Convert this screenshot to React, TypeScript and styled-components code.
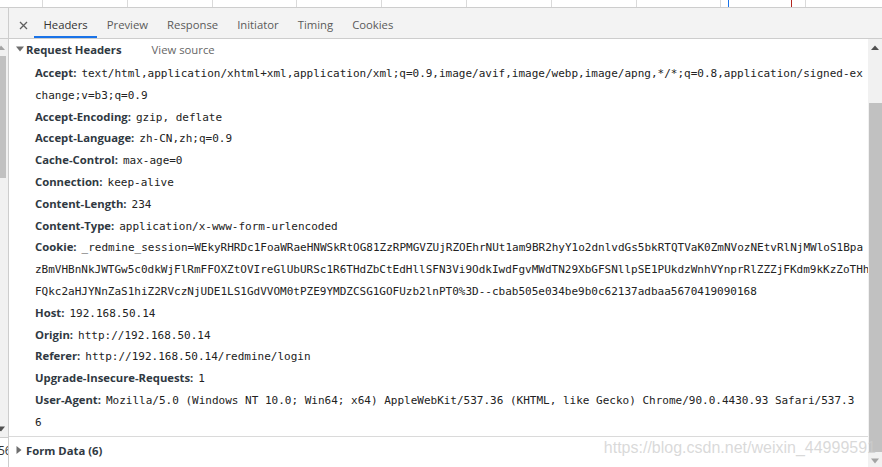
import React from "react";
import styled, { createGlobalStyle } from "styled-components";

const Global = createGlobalStyle`
  html, body { margin: 0; padding: 0; background: #fff; overflow: hidden; }
  * { box-sizing: border-box; }
`;

const UI = `"Open Sans", "Noto Sans", "Liberation Sans", sans-serif`;
const MONO = `"DejaVu Sans Mono", "Liberation Mono", monospace`;
const UI_SIZE = "11.3px";

const Root = styled.div`
  width: 882px;
  height: 467px;
  display: flex;
  flex-direction: column;
  position: relative;
  overflow: hidden;
  font-family: ${UI};
`;

const Timeline = styled.div`
  height: 8px;
  flex: none;
  border-bottom: 1px solid #cdcdcd;
  display: grid;
  grid-template-columns: 42px repeat(10, 84.8px) 1fr;
  position: relative;
`;

const TimeCell = styled.div<{ $first?: boolean }>`
  border-left: ${(p) => (p.$first ? "none" : "1px solid #dadada")};
`;

const Marker = styled.div<{ $x: number; $color: string }>`
  position: absolute;
  top: 0;
  bottom: 0;
  left: ${(p) => p.$x}px;
  width: 1px;
  background: ${(p) => p.$color};
`;

const Main = styled.div`
  flex: 1;
  display: flex;
  min-height: 0;
`;

const LeftPanel = styled.div`
  width: 9px;
  flex: none;
  border-right: 1px solid #cdcdcd;
  display: flex;
  flex-direction: column;
  overflow: hidden;
`;

const LeftTabArea = styled.div`
  height: 31px;
  flex: none;
  background: #f3f3f3;
  border-bottom: 1px solid #cdcdcd;
`;

const LeftScroll = styled.div`
  flex: 1;
  background: #f1f1f1;
  display: flex;
  flex-direction: column;
`;

const LeftArrow = styled.div`
  height: 17px;
  flex: none;
  display: flex;
  align-items: center;
  svg { margin-left: -3px; }
`;

const LeftThumb = styled.div`
  width: 6px;
  height: 122px;
  background: #c1c1c1;
  flex: none;
`;

const Spacer = styled.div`
  flex: 1;
`;

const LeftStatus = styled.div`
  height: 30px;
  flex: none;
  border-top: 1px solid #cdcdcd;
  font-size: 12px;
  line-height: 26px;
  color: #333;
  white-space: nowrap;
  margin-left: -2px;
  background: #fff;
`;

const RightPanel = styled.div`
  flex: 1;
  display: flex;
  flex-direction: column;
  min-width: 0;
`;

const TabBar = styled.div`
  height: 31px;
  flex: none;
  background: #f3f3f3;
  border-bottom: 1px solid #cdcdcd;
  display: flex;
  align-items: stretch;
`;

const CloseBtn = styled.div`
  width: 25px;
  display: flex;
  align-items: center;
  justify-content: center;
  padding-left: 3px;
  padding-top: 4px;
`;

const Tab = styled.div<{ $active?: boolean }>`
  padding: 5px 9.5px 0;
  display: flex;
  align-items: center;
  font-size: ${UI_SIZE};
  color: ${(p) => (p.$active ? "#333" : "#5a5a5a")};
  border-bottom: 2px solid ${(p) => (p.$active ? "#1a73e8" : "transparent")};
  white-space: nowrap;
`;

const Body = styled.div`
  flex: 1;
  display: flex;
  min-height: 0;
`;

const Content = styled.div`
  flex: 1;
  display: flex;
  flex-direction: column;
  min-width: 0;
`;

const SectionTitle = styled.div<{ $top?: boolean }>`
  display: flex;
  align-items: center;
  height: ${(p) => (p.$top ? "20px" : "28px")};
  padding-left: 7px;
  font-size: ${UI_SIZE};
  white-space: nowrap;
  ${(p) => (p.$top ? "" : "border-top: 1px solid #dadada;")}
`;

const Triangle = styled.span`
  width: 10px;
  display: inline-flex;
  align-items: center;
  svg { display: block; }
`;

const TitleText = styled.span`
  font-weight: 700;
  color: #303942;
`;

const ViewSource = styled.span`
  margin-left: 30px;
  color: #666;
`;

const HeaderList = styled.div`
  padding: 4px 0 2px 26px;
`;

const HeaderRow = styled.div`
  font-size: 11px;
  line-height: 21.8px;
  white-space: nowrap;
  color: #222;
  font-family: ${MONO};
`;

const Key = styled.span`
  font-family: ${UI};
  font-weight: 700;
  font-size: ${UI_SIZE};
  line-height: 1;
  color: #303942;
  margin-right: 5px;
`;

const ScrollBar = styled.div`
  width: 14px;
  flex: none;
  background: #f1f1f1;
  display: flex;
  flex-direction: column;
  align-items: stretch;
`;

const ScrollArrow = styled.div`
  height: 17px;
  flex: none;
  display: flex;
  align-items: center;
  justify-content: center;
`;

const ScrollThumb = styled.div`
  margin-top: 47px;
  margin-left: 1px;
  height: 349px;
  background: #c1c1c1;
  flex: none;
`;

const Watermark = styled.div`
  position: absolute;
  right: 6px;
  bottom: 10px;
  font-family: "Liberation Sans", Arial, sans-serif;
  font-size: 16px;
  color: rgba(205, 205, 205, 0.75);
  pointer-events: none;
  white-space: nowrap;
`;

const cookie =
  "_redmine_session=WEkyRHRDc1FoaWRaeHNWSkRtOG81ZzRPMGVZUjRZOEhrNUt1am9BR2hyY1o2dnlvdGs5bkRTQTVaK0ZmNVozNEtvRlNjMWloS1BpazBmVHBnNkJWTGw5c0dkWjFlRmFFOXZtOVIreGlUbURSc1R6THdZbCtEdHllSFN3Vi9OdkIwdFgvMWdTN29XbGFSNllpSE1PUkdzWnhVYnprRlZZZjFKdm9kKzZoTHhFQkc2aHJYNnZaS1hiZ2RVczNjUDE1LS1GdVVOM0tPZE9YMDZCSG1GOFUzb2lnPT0%3D--cbab505e034be9b0c62137adbaa5670419090168";
const c1 = cookie.indexOf("zBmVHB");
const c2 = cookie.indexOf("FQkc2a");

const headers: [string, string[]][] = [
  ["Accept:", ["text/html,application/xhtml+xml,application/xml;q=0.9,image/avif,image/webp,image/apng,*/*;q=0.8,application/signed-ex", "change;v=b3;q=0.9"]],
  ["Accept-Encoding:", ["gzip, deflate"]],
  ["Accept-Language:", ["zh-CN,zh;q=0.9"]],
  ["Cache-Control:", ["max-age=0"]],
  ["Connection:", ["keep-alive"]],
  ["Content-Length:", ["234"]],
  ["Content-Type:", ["application/x-www-form-urlencoded"]],
  ["Cookie:", [cookie.slice(0, c1), cookie.slice(c1, c2), cookie.slice(c2)]],
  ["Host:", ["192.168.50.14"]],
  ["Origin:", ["http://192.168.50.14"]],
  ["Referer:", ["http://192.168.50.14/redmine/login"]],
  ["Upgrade-Insecure-Requests:", ["1"]],
  ["User-Agent:", ["Mozilla/5.0 (Windows NT 10.0; Win64; x64) AppleWebKit/537.36 (KHTML, like Gecko) Chrome/90.0.4430.93 Safari/537.3", "6"]],
];

const tabs = ["Headers", "Preview", "Response", "Initiator", "Timing", "Cookies"];

const DownTri = ({ color = "#6e6e6e" }: { color?: string }) => (
  <svg width="8" height="6" viewBox="0 0 8 6"><path d="M0 0.5 L8 0.5 L4 5.5 Z" fill={color} /></svg>
);
const RightTri = ({ color = "#6e6e6e" }: { color?: string }) => (
  <svg width="6" height="8" viewBox="0 0 6 8"><path d="M0.5 0 L5.5 4 L0.5 8 Z" fill={color} /></svg>
);
const UpTri = ({ color = "#505050" }: { color?: string }) => (
  <svg width="8" height="5" viewBox="0 0 8 5"><path d="M0 5 L4 0.5 L8 5 Z" fill={color} /></svg>
);

export default function App() {
  return (
    <Root>
      <Global />
      <Timeline>
        {Array.from({ length: 12 }).map((_, i) => (
          <TimeCell key={i} $first={i === 0} />
        ))}
        <Marker $x={728} $color="#1a73e8" />
        <Marker $x={791} $color="#b3261e" />
      </Timeline>
      <Main>
        <LeftPanel>
          <LeftTabArea />
          <LeftScroll>
            <LeftArrow><UpTri color="#a3a3a3" /></LeftArrow>
            <LeftThumb />
            <Spacer />
            <LeftArrow><DownTri color="#505050" /></LeftArrow>
          </LeftScroll>
          <LeftStatus>56</LeftStatus>
        </LeftPanel>
        <RightPanel>
          <TabBar>
            <CloseBtn>
              <svg width="9" height="9" viewBox="0 0 9 9">
                <path d="M1 1 L8 8 M8 1 L1 8" stroke="#5f5f5f" strokeWidth="1.3" />
              </svg>
            </CloseBtn>
            {tabs.map((t) => (
              <Tab key={t} $active={t === "Headers"}>{t}</Tab>
            ))}
          </TabBar>
          <Body>
            <Content>
              <SectionTitle $top>
                <Triangle><DownTri /></Triangle>
                <TitleText>Request Headers</TitleText>
                <ViewSource>View source</ViewSource>
              </SectionTitle>
              <HeaderList>
                {headers.map(([k, lines]) => (
                  <HeaderRow key={k}>
                    <Key>{k}</Key>
                    {lines.map((l, i) => (
                      <React.Fragment key={i}>
                        {i > 0 && <br />}
                        {l}
                      </React.Fragment>
                    ))}
                  </HeaderRow>
                ))}
              </HeaderList>
              <SectionTitle>
                <Triangle><RightTri /></Triangle>
                <TitleText>Form Data (6)</TitleText>
              </SectionTitle>
            </Content>
            <ScrollBar>
              <ScrollArrow><UpTri /></ScrollArrow>
              <ScrollThumb />
              <Spacer />
              <ScrollArrow><DownTri color="#a3a3a3" /></ScrollArrow>
            </ScrollBar>
          </Body>
        </RightPanel>
      </Main>
      <Watermark>https://blog.csdn.net/weixin_44999591</Watermark>
    </Root>
  );
}
